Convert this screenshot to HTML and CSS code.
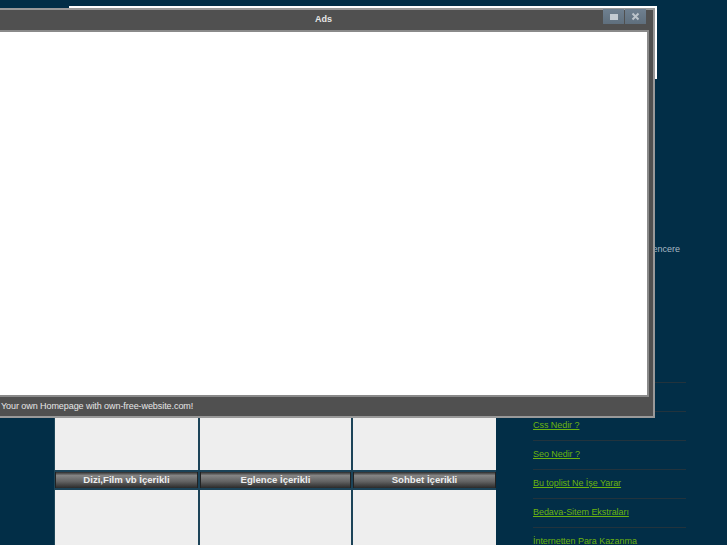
FILE: index.html
```html
<!DOCTYPE html>
<html lang="en">
<head>
  <meta charset="UTF-8" />
  <title>Ads</title>
  <link rel="stylesheet" href="styles.css">
</head>
<body>

  <div class="banner"></div>

  <div class="page">
    <div class="main">
      <div class="cells">
        <div class="cell"></div>
        <div class="cell"></div>
        <div class="cell"></div>
      </div>
      <div class="tabs">
        <div class="tab">Dizi,Film vb İçerikli</div>
        <div class="tab">Eglence İçerikli</div>
        <div class="tab">Sohbet İçerikli</div>
      </div>
      <div class="cells cells-end">
        <div class="cell"></div>
        <div class="cell"></div>
        <div class="cell"></div>
      </div>
    </div>

    <div class="side">
      <p class="side-note">Pencere</p>
      <ul class="links">
        <li><a href="#">Html Nedir ?</a></li>
        <li><a href="#">Css Nedir ?</a></li>
        <li><a href="#">Seo Nedir ?</a></li>
        <li><a href="#">Bu toplist Ne İşe Yarar</a></li>
        <li><a href="#">Bedava-Sitem Ekstraları</a></li>
        <li><a href="#">İnternetten Para Kazanma</a></li>
      </ul>
    </div>
  </div>

  <div class="popup">
    <div class="popup-title">
      <span>Ads</span>
      <div class="popup-btns">
        <div class="popup-btn"><i class="max-icon"></i></div>
        <div class="popup-btn">
          <svg width="9" height="9" viewBox="0 0 9 9"><path d="M1.5 1.5 7.5 7.5M7.5 1.5 1.5 7.5" stroke="#bcc4cb" stroke-width="2" fill="none"/></svg>
        </div>
      </div>
    </div>
    <div class="popup-body"></div>
    <div class="popup-foot">Your own Homepage with own-free-website.com!</div>
  </div>

</body>
</html>
```

FILE: styles.css
```css
html, body {
  height: 545px;
  overflow: hidden;
}

body {
  margin: 0;
  background-color: #022e47;
  font-family: "Liberation Sans", Arial, sans-serif;
}

.banner {
  width: 588px;
  height: 73px;
  margin: 6px 0 0 69px;
  background-color: #fff;
}

.page {
  display: flex;
  margin-left: 55px;
}

.main {
  width: 441px;
  margin-top: 99px;
  background-color: #1c4358;
  box-shadow: -1px 0 #1d4659;
}

.cells {
  display: grid;
  grid-template-columns: 143px 151px 143px;
  column-gap: 2px;
}

.cell {
  height: 292px;
  background-color: #eee;
}

.cells-end .cell {
  height: 55px;
}

.tabs {
  display: grid;
  grid-template-columns: 143px 151px 143px;
  column-gap: 2px;
  padding: 2px 0;
}

.tab {
  height: 16px;
  line-height: 15px;
  text-align: center;
  font-size: 9.6px;
  font-weight: bold;
  color: #eee;
  background: linear-gradient(#2c2c2c 0, #858585 22%, #626262 60%, #2a2a2a 100%);
  border-left: 1px solid #222;
  border-right: 1px solid #222;
  box-sizing: border-box;
}

.side {
  margin-left: 37px;
  width: 153px;
}

.side-note {
  margin: 164px 6px 0 0;
  font-size: 9px;
  color: #a9bac4;
  text-align: right;
  line-height: 12px;
}

.links {
  list-style: none;
  margin: 127px 0 0;
  padding: 0;
}

.links li {
  height: 28px;
  border-top: 1px solid #22333d;
  line-height: 26px;
  font-size: 9px;
  letter-spacing: -0.05px;
}

.links li:last-child {
  height: 18px;
  line-height: 26px;
}

.links a {
  color: #6bb30f;
}

.popup {
  position: absolute;
  left: -8px;
  top: 8px;
  width: 663px;
  height: 410px;
  box-sizing: border-box;
  display: flex;
  flex-direction: column;
  background-color: #505050;
  border: 2px solid #999;
  border-left: 0;
}

.popup-title {
  height: 20px;
  padding-left: 2px;
  position: relative;
  text-align: center;
  line-height: 19px;
  font-size: 9px;
  font-weight: bold;
  color: #e6e6e6;
}

.popup-btns {
  position: absolute;
  right: 7px;
  top: -1px;
  display: flex;
  gap: 1px;
}

.popup-btn {
  width: 21px;
  height: 15px;
  display: flex;
  align-items: center;
  justify-content: center;
  background: linear-gradient(#6f8090, #5f6f7d);
}

.max-icon {
  display: block;
  width: 8px;
  height: 6px;
  background-color: #c3cbd2;
}

.popup-body {
  height: 367px;
  margin-right: 4px;
  background-color: #fff;
  border: 2px solid #8a8a8a;
  border-left: 0;
  box-sizing: border-box;
}

.popup-foot {
  flex: 1;
  padding-left: 9px;
  line-height: 19px;
  font-size: 9px;
  letter-spacing: -0.07px;
  color: #e6e6e6;
}
```
